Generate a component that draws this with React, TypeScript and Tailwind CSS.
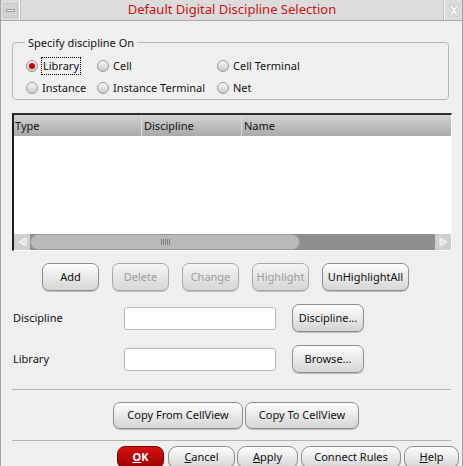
import type { ReactNode } from "react";

const FONT = "font-['Noto_Sans',sans-serif]";

function Btn({
  children,
  w,
  h = "h-[28px]",
  disabled,
  className = "",
}: {
  children: ReactNode;
  w: string;
  h?: string;
  disabled?: boolean;
  className?: string;
}) {
  return (
    <button
      type="button"
      className={`${w} ${h} ${className} flex shrink-0 items-center justify-center rounded-[7px] border text-[11px] shadow-[0_1px_0_#bdbdbd] ${
        disabled
          ? "border-[#a9a9a9] bg-linear-to-b from-[#f4f4f4] to-[#d6d6d6] text-[#9c9c9c]"
          : "border-[#8e8e8e] bg-linear-to-b from-[#fdfdfd] to-[#d5d5d5] text-[#111]"
      }`}
    >
      {children}
    </button>
  );
}

function Radio({ label, checked, focus }: { label: string; checked?: boolean; focus?: boolean }) {
  return (
    <label className="flex h-[22px] items-center gap-[4px] whitespace-nowrap">
      <span className="flex h-[12px] w-[12px] items-center justify-center rounded-full border border-[#9a9a9a] bg-linear-to-b from-[#fbfbfb] to-[#c9c9c9]">
        {checked && <span className="h-[6px] w-[6px] rounded-full bg-[#d40000]" />}
      </span>
      <span className={focus ? "px-[1px] outline-1 outline-dotted outline-black" : ""}>{label}</span>
    </label>
  );
}

function Arrow({ dir }: { dir: "left" | "right" }) {
  return (
    <div className="flex h-full w-[16px] shrink-0 items-center justify-center bg-[#cfcfcf]">
      <svg width="9" height="10" viewBox="0 0 9 10">
        <path
          d={dir === "left" ? "M8 1 L1 5 L8 9 Z" : "M1 1 L8 5 L1 9 Z"}
          fill="#e4e4e4"
          stroke="#f6f6f6"
          strokeWidth="1"
        />
      </svg>
    </div>
  );
}

export default function App() {
  return (
    <div
      className={`${FONT} flex h-[466px] w-[463px] flex-col overflow-hidden border-x border-[#a3a3a3] bg-[#efefef] text-[11px] text-[#111]`}
    >
      {/* title bar */}
      <div className="flex h-[21px] shrink-0 border-b border-[#a8a8a8] bg-[#dcdcdc]">
        <div className="flex w-[19px] items-center justify-center border-r border-[#fafafa]">
          <div className="flex h-[15px] w-[15px] items-center justify-center border border-[#c6c6c6] bg-[#d4d4d4]">
            <div className="h-[3px] w-[9px] border border-[#9a9a9a] bg-[#fafafa]" />
          </div>
        </div>
        <div className="flex flex-1 items-center justify-center border-x border-[#c2c2c2] text-[13px] text-[#cc1111]">
          Default Digital Discipline Selection
        </div>
        <div className="flex w-[18px] items-center justify-center border-l border-[#fafafa]">
          <svg width="12" height="13" viewBox="0 0 12 13">
            <path
              d="M1 1 L4 1 L6 4 L8 1 L11 1 L7.5 6.5 L11 12 L8 12 L6 9 L4 12 L1 12 L4.5 6.5 Z"
              fill="#f6f6f6"
              stroke="#a4a4a4"
              strokeWidth="0.8"
              strokeDasharray="1.2 0.8"
            />
          </svg>
        </div>
      </div>

      <div className="flex flex-1 flex-col px-[11px]">
        {/* discipline group */}
        <fieldset className="mt-[14px] mr-[2px] rounded-[4px] border border-[#b6b6b6] px-[12px] pb-0">
          <legend className="px-[3px] leading-[15px]">Specify discipline On</legend>
          <div className="mt-[5px] grid grid-cols-[71px_120px_1fr] pl-[1px]">
            <Radio label="Library" checked focus />
            <Radio label="Cell" />
            <Radio label="Cell Terminal" />
            <Radio label="Instance" />
            <Radio label="Instance Terminal" />
            <Radio label="Net" />
          </div>
        </fieldset>

        {/* table */}
        <div className="mt-[13px] flex h-[138px] w-[440px] flex-col border-t-2 border-l-2 border-b border-r border-t-[#2e2e2e] border-l-[#1e1e1e] border-b-[#fafafa] border-r-[#fafafa] bg-white">
          <div className="flex h-[21px] shrink-0 bg-linear-to-b from-[#d3d3d3] to-[#a9a9a9] leading-[21px]">
            <div className="w-[128px] border-r border-[#dcdcdc] pl-[1px]">Type</div>
            <div className="w-[100px] border-r border-[#dcdcdc] pl-[2px]">Discipline</div>
            <div className="flex-1 pl-[2px]">Name</div>
          </div>
          <div className="flex-1" />
          <div className="flex h-[16px] shrink-0 bg-[#8e8e8e]">
            <Arrow dir="left" />
            <div className="flex h-full w-[270px] items-center justify-center rounded-full border border-[#9c9c9c] bg-[#b9b9b9]">
              <div className="flex gap-[1px]">
                {[0, 1, 2, 3, 4].map((i) => (
                  <div key={i} className="h-[6px] w-[1px] bg-[#7e7e7e]" />
                ))}
              </div>
            </div>
            <div className="flex-1" />
            <Arrow dir="right" />
          </div>
        </div>

        {/* action buttons */}
        <div className="mt-[12px] flex gap-[13px] pl-[30px]">
          <Btn w="w-[57px]">Add</Btn>
          <Btn w="w-[57px]" disabled>
            Delete
          </Btn>
          <Btn w="w-[57px]" disabled>
            Change
          </Btn>
          <Btn w="w-[57px]" disabled>
            Highlight
          </Btn>
          <Btn w="w-[87px]">UnHighlightAll</Btn>
        </div>

        {/* fields */}
        <div className="mt-[13px] flex h-[28px] items-center">
          <div className="w-[112px] pl-[1px]">Discipline</div>
          <input className="h-[23px] w-[152px] rounded-[3px] border border-[#b8b8b8] bg-white outline-none" />
          <Btn w="w-[72px]" className="ml-[16px]">
            Discipline...
          </Btn>
        </div>
        <div className="mt-[13px] flex h-[28px] items-center">
          <div className="w-[112px] pl-[1px]">Library</div>
          <input className="h-[23px] w-[152px] rounded-[3px] border border-[#b8b8b8] bg-white outline-none" />
          <Btn w="w-[72px]" className="ml-[16px]">
            Browse...
          </Btn>
        </div>

        <div className="mt-[16px] h-px bg-[#b3b3b3]" />

        <div className="mt-[12px] flex gap-[2px] pl-[101px]">
          <Btn w="w-[130px]" h="h-[27px]">
            Copy From CellView
          </Btn>
          <Btn w="w-[114px]" h="h-[27px]">
            Copy To CellView
          </Btn>
        </div>

        <div className="mt-[11px] h-px bg-[#b3b3b3]" />

        <div className="mt-[5px] flex pl-[105px]">
          <button
            type="button"
            className="flex h-[23px] w-[47px] shrink-0 items-center justify-center rounded-[8px] border border-[#7a0000] bg-linear-to-b from-[#d81010] to-[#9a0000] text-[11px] font-bold text-white"
          >
            <span className="underline">O</span>K
          </button>
          <Btn w="w-[67px]" h="h-[23px]" className="ml-[4px] rounded-[9px]">
            <span className="underline">C</span>ancel
          </Btn>
          <Btn w="w-[61px]" h="h-[23px]" className="ml-[2px] rounded-[9px]">
            <span className="underline">A</span>pply
          </Btn>
          <Btn w="w-[100px]" h="h-[23px]" className="ml-[3px] rounded-[9px]">
            Connect Rules
          </Btn>
          <Btn w="w-[55px]" h="h-[23px]" className="ml-[3px] rounded-[9px]">
            <span className="underline">H</span>elp
          </Btn>
        </div>
      </div>
    </div>
  );
}
